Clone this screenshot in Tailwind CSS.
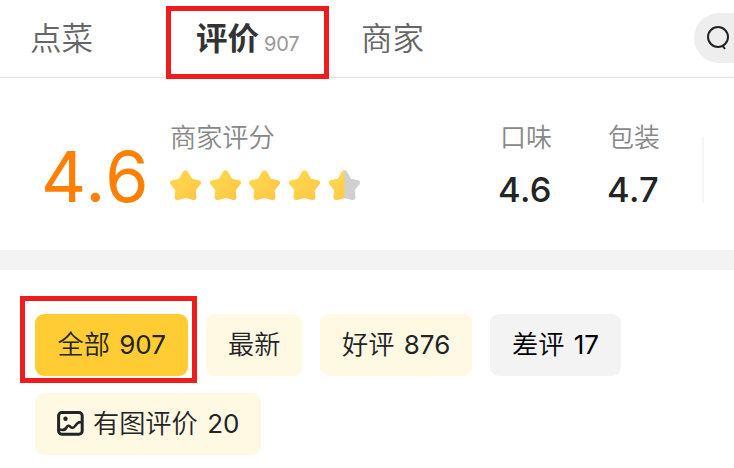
<!DOCTYPE html>
<html lang="zh-CN">
<head>
<meta charset="utf-8">
<title>评价</title>
<script src="https://cdn.jsdelivr.net/npm/@tailwindcss/browser@4"></script>
</head>
<body class="relative w-[734px] h-[468px] overflow-hidden bg-white font-['Inter','Noto_Sans_CJK_SC',sans-serif] text-[#222426]">
<svg class="absolute" width="0" height="0">
  <defs>
    <linearGradient id="gold" x1="0" y1="0" x2="1" y2="1"><stop offset="0.1" stop-color="#ffda50"/><stop offset="0.9" stop-color="#ffc645"/></linearGradient>
    <path id="star" d="M13 1.7Q15.5-1.2 18 1.7L21.6 8Q22.1 8.8 23 9L29 10.3Q32.3 11.6 30.4 14.6L26.3 19.4Q25.7 20.2 25.8 21.1L26.5 27.3Q26.2 30.6 22.8 30L16.6 28.2Q15.5 27.9 14.4 28.2L8.2 30Q4.8 30.6 4.5 27.3L5.2 21.1Q5.3 20.2 4.7 19.4L.6 14.6Q-1.3 11.6 2 10.3L8 9Q8.9 8.8 9.4 8Z"/>
  </defs>
</svg>

<header class="flex h-[78px] border-b border-[#e2e2e2] pl-[30px] leading-[78px] text-[31.5px] text-[#666] font-[350]">
  <div class="w-[166px] shrink-0">点菜</div>
  <div class="flex w-[165px] shrink-0 text-[#333]"><span class="font-bold">评价</span><span class="ml-[5px] pt-[5px] text-[20px] tracking-[-0.2px] font-normal text-[#999]">907</span></div>
  <div class="w-[333px] shrink-0">商家</div>
  <div class="mt-[13px] h-[50px] w-[60px] shrink-0 rounded-l-full bg-[#eee]">
    <svg class="ml-[12px] mt-[11px]" width="26" height="28" fill="none" stroke="#222" stroke-width="2"><circle cx="12" cy="13" r="10"/><path d="M16.5 21.5l2.5 3.5"/></svg>
  </div>
</header>

<section class="flex h-[172px] pl-[41px]">
  <div class="w-[129px] shrink-0 pt-[64px] leading-[70px] text-[70px] tracking-[1.5px] text-[#ff8000]">4.6</div>
  <div class="w-[330px] shrink-0 pt-[40px]">
    <div class="h-[39px] leading-[39px] text-[26.2px] font-[350] text-[#888]">商家评分</div>
    <div class="mt-[13px] flex gap-[8.7px]">
      <svg width="31" height="31"><use href="#star" fill="url(#gold)"/></svg>
      <svg width="31" height="31"><use href="#star" fill="url(#gold)"/></svg>
      <svg width="31" height="31"><use href="#star" fill="url(#gold)"/></svg>
      <svg width="31" height="31"><use href="#star" fill="url(#gold)"/></svg>
      <svg width="31" height="31"><clipPath id="half"><rect width="15.5" height="31"/></clipPath><use href="#star" fill="#d0d0d0"/><use href="#star" fill="url(#gold)" clip-path="url(#half)"/></svg>
    </div>
  </div>
  <div class="w-[108px] shrink-0 pt-[40px]">
    <div class="h-[39px] leading-[39px] text-[26px] font-[350] text-[#888]">口味</div>
    <div class="-ml-[2px] mt-[13px] leading-[40px] text-[34.5px] font-medium tracking-[0.4px]">4.6</div>
  </div>
  <div class="w-[94px] shrink-0 pt-[40px]">
    <div class="h-[39px] leading-[39px] text-[26px] font-[350] text-[#888]">包装</div>
    <div class="-ml-px mt-[13px] leading-[40px] text-[34.5px] font-medium tracking-[0.4px]">4.7</div>
  </div>
  <div class="mt-[59px] h-[66px] w-[2px] bg-[#f5f5f5]"></div>
</section>

<div class="h-[20px] bg-[#f3f3f3]"></div>

<section class="flex flex-wrap gap-x-[18px] gap-y-[17px] pl-[35px] pt-[44px] text-[26.2px] leading-[61px] font-[350] whitespace-nowrap [word-spacing:2px]">
  <div class="h-[62px] w-[153px] rounded-[9px] bg-[#ffcc33] pl-[22.5px]">全部 <span class="font-normal text-[26px]">907</span></div>
  <div class="h-[62px] w-[96px] rounded-[9px] bg-[#fff8e3] pl-[22px]">最新</div>
  <div class="h-[62px] w-[152px] rounded-[9px] bg-[#fff8e3] pl-[22px]">好评 <span class="font-normal text-[26px]">876</span></div>
  <div class="h-[62px] w-[131px] rounded-[9px] bg-[#f3f3f3] pl-[22px] text-black">差评 <span class="font-normal text-[26px]">17</span></div>
  <div class="flex h-[62px] w-[226px] items-start rounded-[9px] bg-[#fff8e3] pl-[22px]">
    <svg class="mr-[9px] mt-[18px] shrink-0" width="27" height="25" fill="none" stroke="#222426"><rect x="1.6" y="1.6" width="23.6" height="21.6" rx="3.2" stroke-width="3"/><circle cx="8.5" cy="7.8" r="2.2" fill="#222426" stroke="none"/><path d="M3 18.6Q7.5 20 9.5 16.5Q11 13.3 13.5 15.8Q15.5 18 17.6 15.5L20.5 12.2Q22 11 24 11.2" stroke-width="2.6"/></svg>
    <span>有图评价 <span class="font-normal text-[26px]">20</span></span>
  </div>
</section>

<div class="absolute left-[166px] top-[6px] h-[73px] w-[163px] border-[5px] border-[#ee1c1c]"></div>
<div class="absolute left-[20px] top-[296px] h-[87px] w-[177px] border-[5px] border-[#ee1c1c]"></div>
</body>
</html>
